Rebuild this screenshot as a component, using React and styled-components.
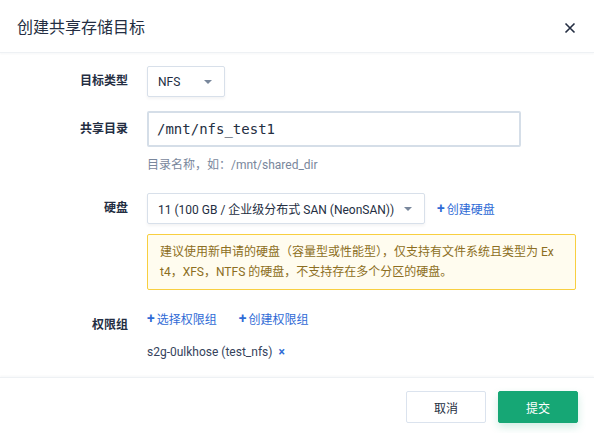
import React from 'react'
import styled, { createGlobalStyle } from 'styled-components';

const GlobalStyle = createGlobalStyle`
body {
  margin: 0;
  background: #fff;
  font-family: Roboto, "Noto Sans CJK SC", sans-serif;
  color: #242e42;
}
`;

const Modal = styled.div`
width: 594px;
height: 433px;
display: flex;
flex-direction: column;
background: #fff;
`;

const Header = styled.div`
height: 53px;
display: flex;
align-items: center;
justify-content: space-between;
padding: 0 18px 0 17px;
border-bottom: 1px solid #eef1f4;
box-shadow: 0 1px 2px rgba(36, 46, 66, 0.04);
box-sizing: border-box;
`;

const Title = styled.div`
font-size: 16px;
color: #242e42;
`;

const Close = styled.button`
border: none;
background: none;
padding: 0;
display: flex;
color: #242e42;
margin-top: 4px;
`;

const Body = styled.div`
flex: 1;
padding-top: 13px;
display: flex;
flex-direction: column;
`;

const Row = styled.div`
display: grid;
grid-template-columns: 128px 1fr;
column-gap: 19px;
margin-bottom: ${({ gap }) => gap || 0}px;
`;

const Label = styled.div`
text-align: right;
font-size: 12px;
font-weight: 600;
color: #242e42;
line-height: ${({ h }) => h || 31}px;
`;

const Field = styled.div`
display: flex;
flex-direction: column;
align-items: flex-start;
`;

const Inline = styled.div`
display: flex;
align-items: center;
gap: ${({ gap }) => gap || 12}px;
`;

const Select = styled.div`
width: ${({ w }) => w}px;
height: 31px;
box-sizing: border-box;
border: 1px solid #d8e0ea;
border-radius: 2px;
box-shadow: 0 2px 3px rgba(36, 46, 66, 0.05);
display: flex;
align-items: center;
justify-content: space-between;
padding: 0 12px 0 10px;
font-size: 12px;
color: #242e42;
`;

const Caret = styled.span`
width: 0;
height: 0;
border-left: 4px solid transparent;
border-right: 4px solid transparent;
border-top: 4px solid #79879c;
margin-top: 1px;
`;

const Input = styled.div`
width: 374px;
height: 36px;
box-sizing: border-box;
border: 2px solid #d5dee8;
border-radius: 2px;
display: flex;
align-items: center;
padding-left: 8px;
font-family: "DejaVu Sans Mono", monospace;
font-size: 14px;
color: #242e42;
`;

const Help = styled.div`
font-size: 12px;
color: #79879c;
margin-top: 8px;
`;

const Link = styled.span`
font-size: 12px;
color: #2f6bd6;
display: inline-flex;
align-items: center;
gap: 2px;
`;

const Plus = styled.span`
font-size: 14px;
font-weight: 600;
margin-top: -1px;
`;

const Warning = styled.div`
width: 429px;
box-sizing: border-box;
margin-top: 10px;
padding: 7px 20px 7px 12px;
background: #fffcef;
border: 1px solid #f8cf40;
border-radius: 2px;
font-size: 12px;
line-height: 20px;
color: #8c6e22;
word-break: break-all;
`;

const Tag = styled.div`
display: flex;
align-items: center;
gap: 6px;
font-size: 12px;
color: #36435c;
margin-top: 18px;
`;

const TagClose = styled.span`
color: #2f6bd6;
font-size: 12px;
font-weight: 700;
`;

const Footer = styled.div`
height: 56px;
box-sizing: border-box;
border-top: 1px solid #eef1f4;
box-shadow: 0 -1px 2px rgba(36, 46, 66, 0.04);
display: flex;
align-items: flex-start;
justify-content: flex-end;
gap: 12px;
padding: 13px 16px 0 0;
`;

const Button = styled.button`
width: 80px;
height: 32px;
border-radius: 2px;
font-family: Roboto, "Noto Sans CJK SC", sans-serif;
font-size: 12px;
border: 1px solid ${({ primary }) => (primary ? '#16a775' : '#dbe3ee')};
background: ${({ primary }) => (primary ? '#16a775' : '#fff')};
color: ${({ primary }) => (primary ? '#fff' : '#242e42')};
box-shadow: ${({ primary }) => (primary ? '0 4px 8px rgba(22,167,117,0.2)' : 'none')};
`;

const App = () => {
  return (
    <Modal>
      <GlobalStyle />
      <Header>
        <Title>创建共享存储目标</Title>
        <Close>
          <svg width="12" height="12" viewBox="0 0 12 12">
            <path d="M1.5 1.5 L10.5 10.5 M10.5 1.5 L1.5 10.5" stroke="currentColor" strokeWidth="1.6" />
          </svg>
        </Close>
      </Header>
      <Body>
        <Row gap={14}>
          <Label>目标类型</Label>
          <Field>
            <Select w={78}>
              NFS
              <Caret />
            </Select>
          </Field>
        </Row>
        <Row gap={21}>
          <Label h={36}>共享目录</Label>
          <Field>
            <Input>/mnt/nfs_test1</Input>
            <Help>目录名称，如：/mnt/shared_dir</Help>
          </Field>
        </Row>
        <Row gap={20}>
          <Label>硬盘</Label>
          <Field>
            <Inline>
              <Select w={278}>
                11 (100 GB / 企业级分布式 SAN (NeonSAN))
                <Caret />
              </Select>
              <Link><Plus>+</Plus>创建硬盘</Link>
            </Inline>
            <Warning>
              建议使用新申请的硬盘（容量型或性能型），仅支持有文件系统且类型为 Ext4，XFS，NTFS 的硬盘，不支持存在多个分区的硬盘。
            </Warning>
          </Field>
        </Row>
        <Row>
          <Label h={30}>权限组</Label>
          <Field>
            <Inline gap={22}>
              <Link><Plus>+</Plus>选择权限组</Link>
              <Link><Plus>+</Plus>创建权限组</Link>
            </Inline>
            <Tag>
              s2g-0ulkhose (test_nfs)
              <TagClose>×</TagClose>
            </Tag>
          </Field>
        </Row>
      </Body>
      <Footer>
        <Button>取消</Button>
        <Button primary>提交</Button>
      </Footer>
    </Modal>
  );
};

export default App;
